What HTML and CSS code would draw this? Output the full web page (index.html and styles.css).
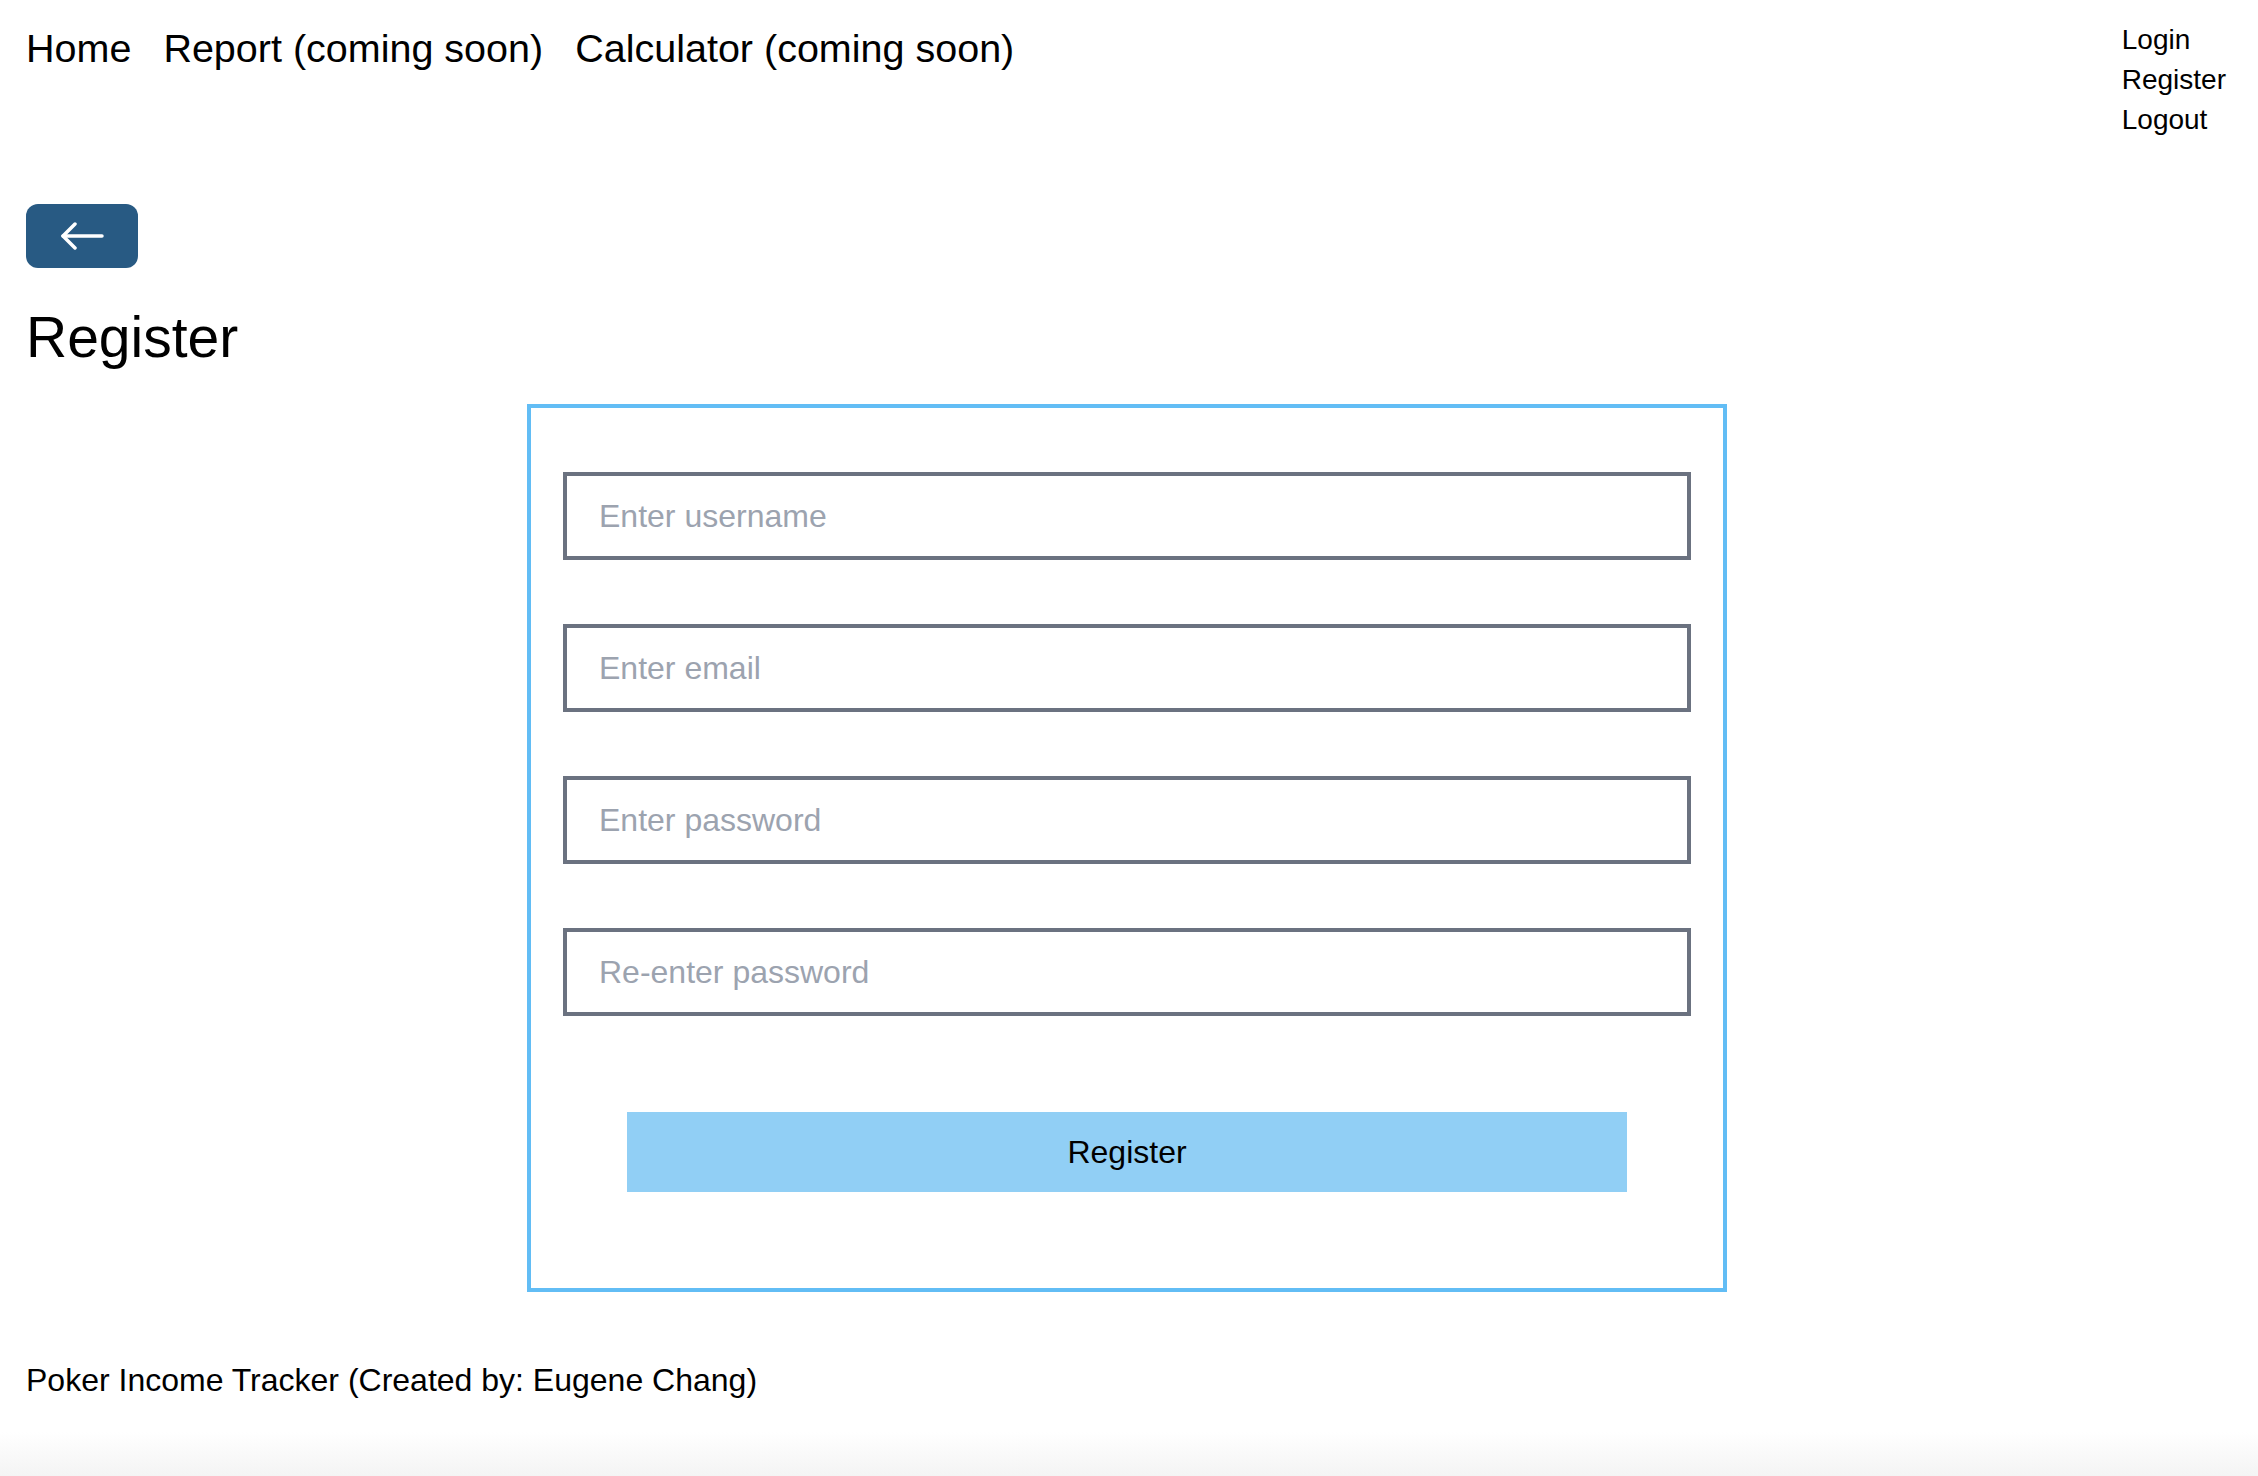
FILE: index.html
```html
<!DOCTYPE html>
<html lang="en">
<head>
<meta charset="utf-8">
<title>Register - Poker Income Tracker</title>
<link rel="stylesheet" href="styles.css">
</head>
<body>
<header class="header">
  <nav class="nav-main">
    <a class="nav-link" href="#">Home</a>
    <a class="nav-link" href="#">Report (coming soon)</a>
    <a class="nav-link" href="#">Calculator (coming soon)</a>
  </nav>
  <nav class="nav-auth">
    <a class="auth-link" href="#">Login</a>
    <a class="auth-link" href="#">Register</a>
    <a class="auth-link" href="#">Logout</a>
  </nav>
</header>
<main class="main">
  <button class="back-btn" type="button" aria-label="Back">
    <svg width="44" height="28" viewBox="0 0 44 28" fill="none" stroke="#ffffff" stroke-width="3.5" stroke-linecap="round" stroke-linejoin="round">
      <path d="M42 14H3"/>
      <path d="M15 2L3 14L15 26"/>
    </svg>
  </button>
  <h1 class="title">Register</h1>
  <form class="form-box">
    <input class="field" type="text" placeholder="Enter username">
    <input class="field" type="email" placeholder="Enter email">
    <input class="field" type="password" placeholder="Enter password">
    <input class="field" type="password" placeholder="Re-enter password">
    <button class="submit" type="button">Register</button>
  </form>
</main>
<footer class="footer">Poker Income Tracker (Created by: Eugene Chang)</footer>
</body>
</html>
```
FILE: styles.css
```css
html, body {
  margin: 0;
  padding: 0;
  height: 100%;
}
body {
  font-family: "Liberation Sans", Arial, sans-serif;
  color: #000;
  background: linear-gradient(to bottom, #ffffff 0, #ffffff calc(100% - 44px), #f4f4f4 100%);
  min-height: 100vh;
  box-sizing: border-box;
}
a { color: inherit; text-decoration: none; }

.header {
  display: flex;
  justify-content: space-between;
  align-items: flex-start;
  padding: 20px 32px 0 26px;
}
.nav-main {
  display: flex;
  gap: 32px;
}
.nav-link {
  font-size: 39.5px;
  line-height: 57px;
}
.nav-auth {
  display: flex;
  flex-direction: column;
}
.auth-link {
  font-size: 28px;
  line-height: 40px;
}

.main {
  padding: 0 32px 0 26px;
  display: flex;
  flex-direction: column;
  align-items: flex-start;
}
.back-btn {
  margin-top: 64px;
  width: 112px;
  height: 64px;
  border: none;
  border-radius: 12px;
  background: #285a83;
  display: flex;
  align-items: center;
  justify-content: center;
  padding: 0;
  cursor: pointer;
}
.title {
  margin: 35px 0 0 0;
  font-size: 57px;
  line-height: 68px;
  font-weight: 400;
}
.form-box {
  align-self: center;
  margin: 33px 0 0 2px;
  width: 1200px;
  box-sizing: border-box;
  border: 4px solid #62bdf5;
  padding: 64px 32px 96px;
  display: flex;
  flex-direction: column;
  align-items: center;
  gap: 64px;
}
.field {
  width: 100%;
  height: 88px;
  box-sizing: border-box;
  border: 4px solid #6b7280;
  border-radius: 0;
  padding: 0 32px;
  font-family: "Liberation Sans", Arial, sans-serif;
  font-size: 32px;
  color: #111;
  outline: none;
  background: #fff;
}
.field::placeholder {
  color: #9ca3af;
}
.submit {
  margin-top: 32px;
  width: 1000px;
  height: 80px;
  border: none;
  background: #91cff5;
  font-family: "Liberation Sans", Arial, sans-serif;
  font-size: 32px;
  color: #000;
  cursor: pointer;
}
.footer {
  margin-top: 64px;
  padding-left: 26px;
  font-size: 32px;
  line-height: 48px;
}
```
